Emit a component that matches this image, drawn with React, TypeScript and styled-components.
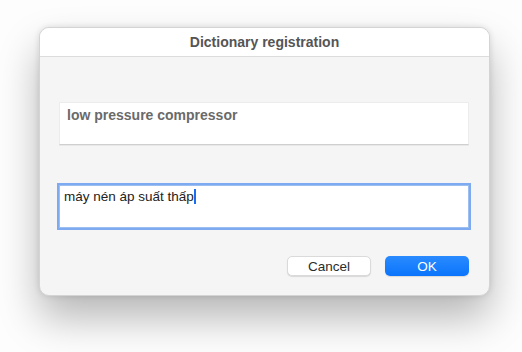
import styled, { createGlobalStyle } from 'styled-components';

const GlobalStyle = createGlobalStyle`
  html, body {
    margin: 0;
    padding: 0;
    background: #fdfdfd;
    font-family: "Liberation Sans", Arial, sans-serif;
  }
`;

const Page = styled.div`
  width: 522px;
  height: 352px;
  padding: 27px 0 0 39px;
  box-sizing: border-box;
`;

const Dialog = styled.section`
  width: 451px;
  height: 269px;
  box-sizing: border-box;
  display: flex;
  flex-direction: column;
  background: #f5f5f5;
  border-radius: 10px;
  border: 1px solid #d4d4d4;
  overflow: hidden;
  box-shadow: 0 22px 40px rgba(0, 0, 0, 0.28), 0 0 6px rgba(0, 0, 0, 0.12);
`;

const TitleBar = styled.header`
  height: 28px;
  flex: none;
  display: flex;
  align-items: center;
  justify-content: center;
  background: #ffffff;
  border-bottom: 1px solid #dcdcdc;
  font-size: 14px;
  font-weight: bold;
  color: #555555;
`;

const Body = styled.div`
  flex: 1;
  display: flex;
  flex-direction: column;
  padding: 45px 20px 19px 19px;
`;

const Field = styled.div<{ $focused?: boolean }>`
  height: 43px;
  box-sizing: border-box;
  background: #ffffff;
  ${(p) =>
    p.$focused
      ? `
    font-size: 13.5px;
    border: 1px solid #9dbff0;
    box-shadow: 0 0 0 2px #7eaaf2;
    padding: 3px 4px;
    color: #222;
  `
      : `
    font-size: 14px;
    border: 1px solid #ececec;
    border-bottom-color: #cfcfcf;
    box-shadow: 0 1px 0 rgba(0,0,0,0.05);
    padding: 4px 7px;
    color: #6a6a6a;
    font-weight: bold;
  `}
`;

const Caret = styled.span`
  display: inline-block;
  width: 2px;
  height: 15px;
  background: #1a6cf0;
  vertical-align: -3px;
`;

const Spacer = styled.div<{ $h: number }>`
  height: ${(p) => p.$h}px;
  flex: none;
`;

const Actions = styled.div`
  margin-top: auto;
  display: flex;
  justify-content: flex-end;
  gap: 14px;
`;

const Button = styled.button<{ $primary?: boolean }>`
  width: 84px;
  height: 20px;
  border-radius: 5px;
  font-family: "Liberation Sans", Arial, sans-serif;
  font-size: 13.5px;
  padding: 0;
  border: ${(p) => (p.$primary ? 'none' : '1px solid #dadada')};
  background: ${(p) => (p.$primary ? 'linear-gradient(#2a8bff, #0a74fb)' : '#ffffff')};
  color: ${(p) => (p.$primary ? '#ffffff' : '#2b2b2b')};
  box-shadow: 0 1px 1px rgba(0, 0, 0, 0.12);
`;

export default function App() {
  return (
    <Page>
      <GlobalStyle />
      <Dialog>
        <TitleBar>Dictionary registration</TitleBar>
        <Body>
          <Field>low pressure compressor</Field>
          <Spacer $h={40} />
          <Field $focused>
            máy nén áp suất thấp
            <Caret />
          </Field>
          <Actions>
            <Button>Cancel</Button>
            <Button $primary>OK</Button>
          </Actions>
        </Body>
      </Dialog>
    </Page>
  );
}
